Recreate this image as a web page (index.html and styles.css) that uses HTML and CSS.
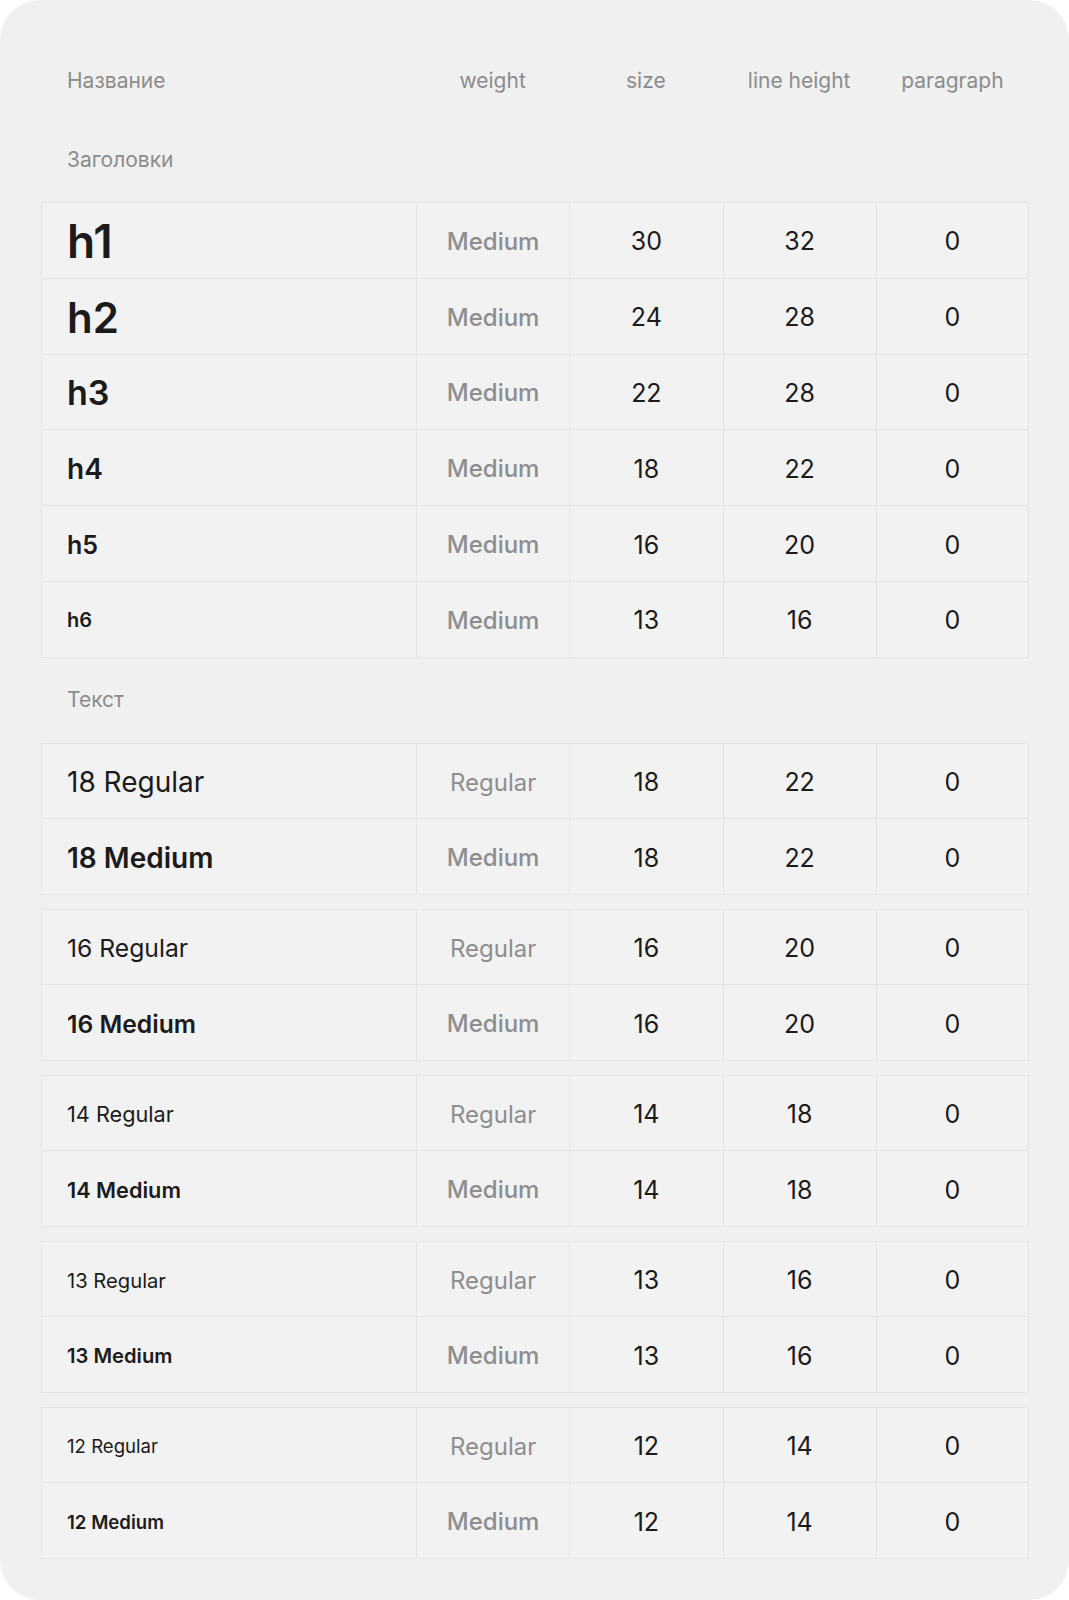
FILE: index.html
```html
<!DOCTYPE html>
<html lang="ru">
<head>
<meta charset="utf-8">
<title>Типографика</title>
<link rel="stylesheet" href="styles.css">
</head>
<body>
<div class="card">
  <div class="head">
    <div class="hcell first">Название</div>
    <div class="hcell">weight</div>
    <div class="hcell">size</div>
    <div class="hcell">line height</div>
    <div class="hcell">paragraph</div>
  </div>

  <div class="label label-top">Заголовки</div>
  <div class="table headings">
    <div class="row"><div class="cell name s-h1">h1</div><div class="cell w med">Medium</div><div class="cell v">30</div><div class="cell v">32</div><div class="cell v">0</div></div>
    <div class="row"><div class="cell name s-h2">h2</div><div class="cell w med">Medium</div><div class="cell v">24</div><div class="cell v">28</div><div class="cell v">0</div></div>
    <div class="row"><div class="cell name s-h3">h3</div><div class="cell w med">Medium</div><div class="cell v">22</div><div class="cell v">28</div><div class="cell v">0</div></div>
    <div class="row"><div class="cell name s-h4">h4</div><div class="cell w med">Medium</div><div class="cell v">18</div><div class="cell v">22</div><div class="cell v">0</div></div>
    <div class="row"><div class="cell name s-h5">h5</div><div class="cell w med">Medium</div><div class="cell v">16</div><div class="cell v">20</div><div class="cell v">0</div></div>
    <div class="row"><div class="cell name s-h6">h6</div><div class="cell w med">Medium</div><div class="cell v">13</div><div class="cell v">16</div><div class="cell v">0</div></div>
  </div>

  <div class="label label-mid">Текст</div>
  <div class="groups">
    <div class="table">
      <div class="row"><div class="cell name t18">18 Regular</div><div class="cell w">Regular</div><div class="cell v">18</div><div class="cell v">22</div><div class="cell v">0</div></div>
      <div class="row"><div class="cell name t18 bold">18 Medium</div><div class="cell w med">Medium</div><div class="cell v">18</div><div class="cell v">22</div><div class="cell v">0</div></div>
    </div>
    <div class="table">
      <div class="row"><div class="cell name t16">16 Regular</div><div class="cell w">Regular</div><div class="cell v">16</div><div class="cell v">20</div><div class="cell v">0</div></div>
      <div class="row"><div class="cell name t16 bold">16 Medium</div><div class="cell w med">Medium</div><div class="cell v">16</div><div class="cell v">20</div><div class="cell v">0</div></div>
    </div>
    <div class="table">
      <div class="row"><div class="cell name t14">14 Regular</div><div class="cell w">Regular</div><div class="cell v">14</div><div class="cell v">18</div><div class="cell v">0</div></div>
      <div class="row"><div class="cell name t14 bold">14 Medium</div><div class="cell w med">Medium</div><div class="cell v">14</div><div class="cell v">18</div><div class="cell v">0</div></div>
    </div>
    <div class="table">
      <div class="row"><div class="cell name t13">13 Regular</div><div class="cell w">Regular</div><div class="cell v">13</div><div class="cell v">16</div><div class="cell v">0</div></div>
      <div class="row"><div class="cell name t13 bold">13 Medium</div><div class="cell w med">Medium</div><div class="cell v">13</div><div class="cell v">16</div><div class="cell v">0</div></div>
    </div>
    <div class="table">
      <div class="row"><div class="cell name t12">12 Regular</div><div class="cell w">Regular</div><div class="cell v">12</div><div class="cell v">14</div><div class="cell v">0</div></div>
      <div class="row"><div class="cell name t12 bold">12 Medium</div><div class="cell w med">Medium</div><div class="cell v">12</div><div class="cell v">14</div><div class="cell v">0</div></div>
    </div>
  </div>
</div>
</body>
</html>
```

FILE: styles.css
```css
* { box-sizing: border-box; }

html, body {
  margin: 0;
  padding: 0;
  background: #ffffff;
}

body {
  font-family: Inter, "Noto Sans", "Liberation Sans", sans-serif;
  color: #1b1b1b;
}

.card {
  width: 1069px;
  height: 1600px;
  background: #f0f0f0;
  border-radius: 40px;
  padding: 60px 40px 42px 41px;
}

.head {
  display: grid;
  grid-template-columns: 375px repeat(4, 1fr);
  height: 40px;
  align-items: center;
}

.hcell {
  font-size: 21px;
  color: #8c8c8c;
  text-align: center;
}

.hcell.first {
  text-align: left;
  padding-left: 26px;
}

.label {
  height: 40px;
  line-height: 40px;
  font-size: 21px;
  color: #8c8c8c;
  padding-left: 26px;
}

.label-top { margin: 40px 0 22px; }
.label-mid { margin: 22px 0 23px; }

.groups {
  display: flex;
  flex-direction: column;
  gap: 14px;
}

.table {
  background: #f2f2f2;
  border: 1px solid #e5e5e7;
  border-right-width: 0;
}

.row {
  display: grid;
  grid-template-columns: 374px repeat(4, 1fr);
  height: 75.5px;
  border-bottom: 1px solid #e5e5e7;
}

.row:last-child { height: 74.5px; border-bottom: 0; }

.headings .row { height: 75.8px; }
.headings .row:last-child { height: 74.8px; }

.cell {
  display: flex;
  align-items: center;
  justify-content: center;
  border-left: 1px solid #e5e5e7;
  padding-top: 2px;
}

.row .cell:last-child { border-right: 1px solid #e5e5e7; }

.cell.name {
  border-left: 0;
  justify-content: flex-start;
  padding-left: 25px;
  color: #1b1b1b;
  white-space: nowrap;
}

.cell.w {
  font-size: 24px;
  color: #8e8e8e;
  font-weight: 400;
}

.cell.w.med { font-weight: 500; }

.cell.v {
  font-size: 25px;
  color: #1b1b1b;
  font-weight: 400;
}

.s-h1 { font-size: 46px; font-weight: 600; }
.s-h2 { font-size: 42px; font-weight: 600; }
.s-h3 { font-size: 34px; font-weight: 600; }
.s-h4 { font-size: 28px; font-weight: 600; }
.s-h5 { font-size: 25px; font-weight: 600; }
.s-h6 { font-size: 20px; font-weight: 600; }

.t18 { font-size: 28px; }
.t16 { font-size: 24.7px; }
.t14 { font-size: 21.7px; }
.t13 { font-size: 20.2px; }
.t12 { font-size: 18.6px; }

.bold { font-weight: 600; }
```
